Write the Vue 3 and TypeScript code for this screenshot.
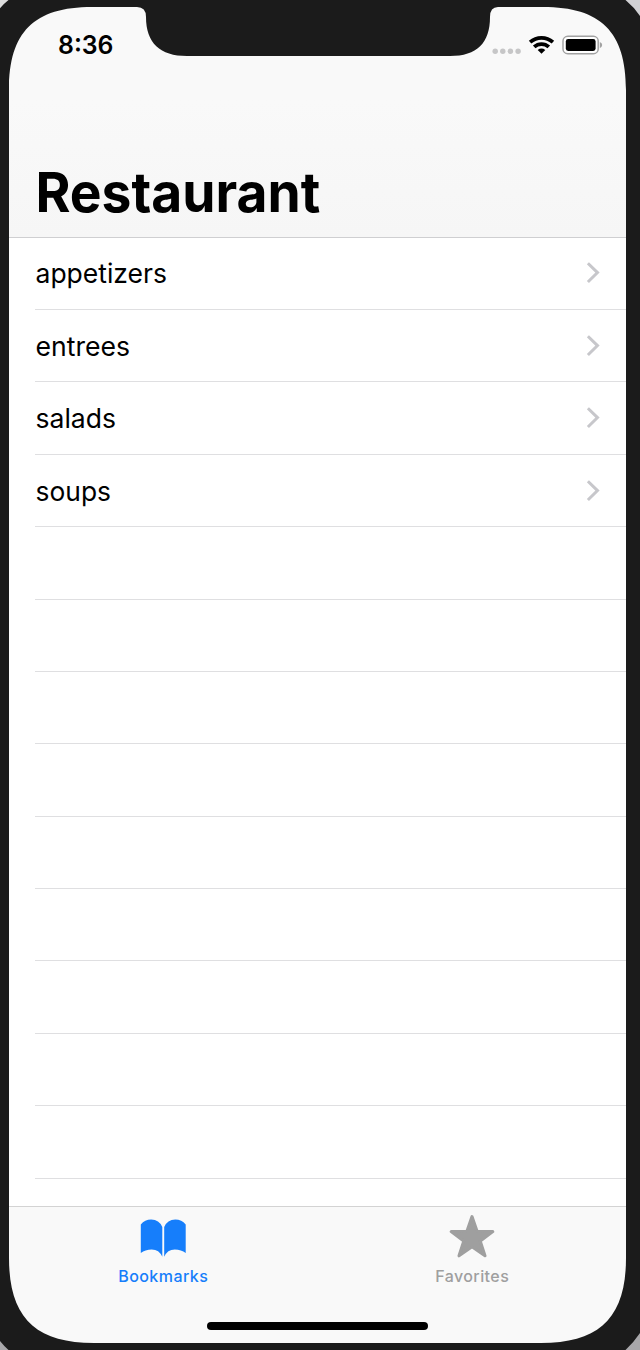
<script setup lang="ts">
interface MenuRow {
  label: string
  width: number
}

const rows: MenuRow[] = [
  { label: 'appetizers', width: 131.5 },
  { label: 'entrees', width: 94.5 },
  { label: 'salads', width: 80.5 },
  { label: 'soups', width: 75.5 },
]
const emptyRows = 10
</script>

<template>
  <main class="device">
    <div class="screen">
      <header class="header">
        <div class="status">
          <svg class="time" width="60" height="34" viewBox="0 0 60 34">
            <text x="0" y="27.3" textLength="55.5" lengthAdjust="spacingAndGlyphs">8:36</text>
          </svg>
          <svg class="indicators" width="112" height="24" viewBox="0 0 112 24">
            <g fill="#c6c6c7">
              <circle cx="4.2" cy="18.2" r="2.7" />
              <circle cx="11.8" cy="18.2" r="2.7" />
              <circle cx="19.4" cy="18.2" r="2.7" />
              <circle cx="27.1" cy="18.2" r="2.7" />
            </g>
            <g fill="none" stroke="#000" stroke-width="3.8">
              <path d="M39.1 9.2 A17.2 17.2 0 0 1 61.9 9.2" />
              <path d="M43.2 13.9 A10.8 10.8 0 0 1 57.8 13.9" />
            </g>
            <path d="M46.7 16.9 Q50.5 14.1 54.3 16.9 L50.5 20.8 Z" />
            <rect x="72" y="3.3" width="35.2" height="17.4" rx="4.8" fill="#fff" stroke="#a2a2a2" stroke-width="1.5" />
            <rect x="74.8" y="6" width="29.8" height="12" rx="2.4" />
            <path d="M108.8 9 Q111.2 10 111.2 12 Q111.2 14 108.8 15.2 Z" fill="#a2a2a2" />
          </svg>
        </div>
        <svg class="title" width="340" height="84" viewBox="0 0 340 84">
          <text x="0.4" y="62" textLength="285" lengthAdjust="spacingAndGlyphs">Restaurant</text>
        </svg>
      </header>
      <section class="list">
        <div v-for="row in rows" :key="row.label" class="row">
          <svg class="label" width="200" height="50" viewBox="0 0 200 50">
            <text x="0.5" y="34.5" :textLength="row.width" lengthAdjust="spacingAndGlyphs">{{ row.label }}</text>
          </svg>
          <svg class="chevron" width="16" height="24" viewBox="0 0 16 24">
            <path d="M1.9 2.2 L11.5 11.6 L1.9 21" />
          </svg>
        </div>
        <div v-for="n in emptyRows" :key="n" class="row"></div>
      </section>
      <nav class="tabs">
        <a class="tab active">
          <svg class="icon" width="48" height="46" viewBox="0 0 48 46">
            <path d="M1.8 9.5 Q5.8 4.4 12.2 4.4 Q20.2 4.4 23.3 12 V41.8 Q20.2 34.4 12.7 34.4 Q6.2 34.4 1.8 38 Z" />
            <path d="M46.7 9.5 Q42.7 4.4 36.3 4.4 Q28.3 4.4 25.2 12 V41.8 Q28.3 34.4 35.8 34.4 Q42.3 34.4 46.7 38 Z" />
          </svg>
          <svg class="caption" width="120" height="24" viewBox="0 0 120 24">
            <text x="60" y="18.6" text-anchor="middle" textLength="89.5">Bookmarks</text>
          </svg>
        </a>
        <a class="tab">
          <svg class="icon" width="48" height="46" viewBox="0 0 48 46">
            <path stroke="currentColor" stroke-width="3" stroke-linejoin="round" d="M24 1.6 L29.1 16.3 L44.8 16.6 L32.3 26.1 L37 40.8 L24 31.8 L11 40.8 L15.7 26.1 L3.2 16.6 L18.9 16.3 Z" />
          </svg>
          <svg class="caption" width="120" height="24" viewBox="0 0 120 24">
            <text x="60" y="18.6" text-anchor="middle" textLength="73.5">Favorites</text>
          </svg>
        </a>
        <span class="home"></span>
      </nav>
    </div>
    <svg class="bezel" width="640" height="1350" viewBox="0 0 640 1350">
      <path
        fill="#1b1b1b"
        fill-rule="evenodd"
        d="M0 0 H640 V1350 H0 Z
           M9 90 V1258 C9 1317 35 1343 94 1343 H541 C600 1343 626 1317 626 1258 V90 C626 32 601 7 543 7 H498 Q490 7 490 17 C490 43 477 56 450 56 H187 C160 56 146 43 146 17 Q146 7 137 7 H92 C34 7 9 32 9 90 Z"
      />
      <path fill="#dcdcdc" d="M0 0 H8.5 Q4 3.5 0 8.3 Z" />
      <path fill="#d2d2d5" d="M625.5 0 H640 V16 Q634 7 625.5 0 Z" />
      <path fill="#a8a7aa" d="M0 1341 Q4 1346 8.5 1350 H0 Z M640 1333 Q634 1342 625.5 1350 H640 Z" />
    </svg>
  </main>
</template>

<style>
body {
  margin: 0;
}
</style>

<style scoped>
.device {
  position: relative;
  box-sizing: border-box;
  width: 640px;
  height: 1350px;
  padding: 7px 14px 7px 9px;
  overflow: hidden;
  background: #1b1b1b;
  font-family: Inter, 'Liberation Sans', sans-serif;
}
svg {
  display: block;
}
.screen {
  display: flex;
  flex-direction: column;
  height: 1336px;
  background: #fff;
}
.header {
  box-sizing: border-box;
  display: flex;
  flex: none;
  flex-direction: column;
  justify-content: space-between;
  height: 231px;
  border-bottom: 1px solid #cfcfd1;
  background: linear-gradient(#f9f9f9 40%, #f6f6f6);
}
.status {
  display: flex;
  justify-content: space-between;
  padding: 20px 23px 0 49px;
}
.time {
  font-size: 25.5px;
  font-weight: 600;
}
.indicators {
  margin-top: 5.5px;
}
.title {
  margin: 0 0 3px 26px;
  font-size: 55px;
  font-weight: 700;
}
.list {
  flex: 1;
  min-height: 0;
  overflow: hidden;
}
.row {
  box-sizing: border-box;
  display: flex;
  align-items: center;
  justify-content: space-between;
  height: 72.39px;
  margin-left: 26px;
  padding-right: 24px;
  border-bottom: 1px solid #dfdfe1;
}
.row:first-child {
  margin-top: -0.3px;
}
.label {
  font-size: 27px;
}
.chevron {
  fill: none;
  stroke: #c7c7cb;
  stroke-width: 3;
}
.tabs {
  box-sizing: border-box;
  display: grid;
  flex: none;
  grid-template-columns: 1fr 1fr;
  grid-template-rows: 114.5px 1fr;
  height: 137px;
  border-top: 1px solid #d3d3d3;
  background: #f9f9f9;
}
.tab {
  display: flex;
  flex-direction: column;
  align-items: center;
  padding-top: 8px;
  color: #9f9f9f;
}
.tab.active {
  color: #167efb;
}
.icon,
.caption {
  fill: currentColor;
}
.caption {
  margin-top: 2px;
  font-size: 16px;
  font-weight: 500;
}
.home {
  grid-column: 1 / 3;
  justify-self: center;
  width: 221px;
  height: 8.5px;
  border-radius: 5px;
  background: #000;
}
.bezel {
  position: absolute;
  top: 0;
  left: 0;
}
</style>
